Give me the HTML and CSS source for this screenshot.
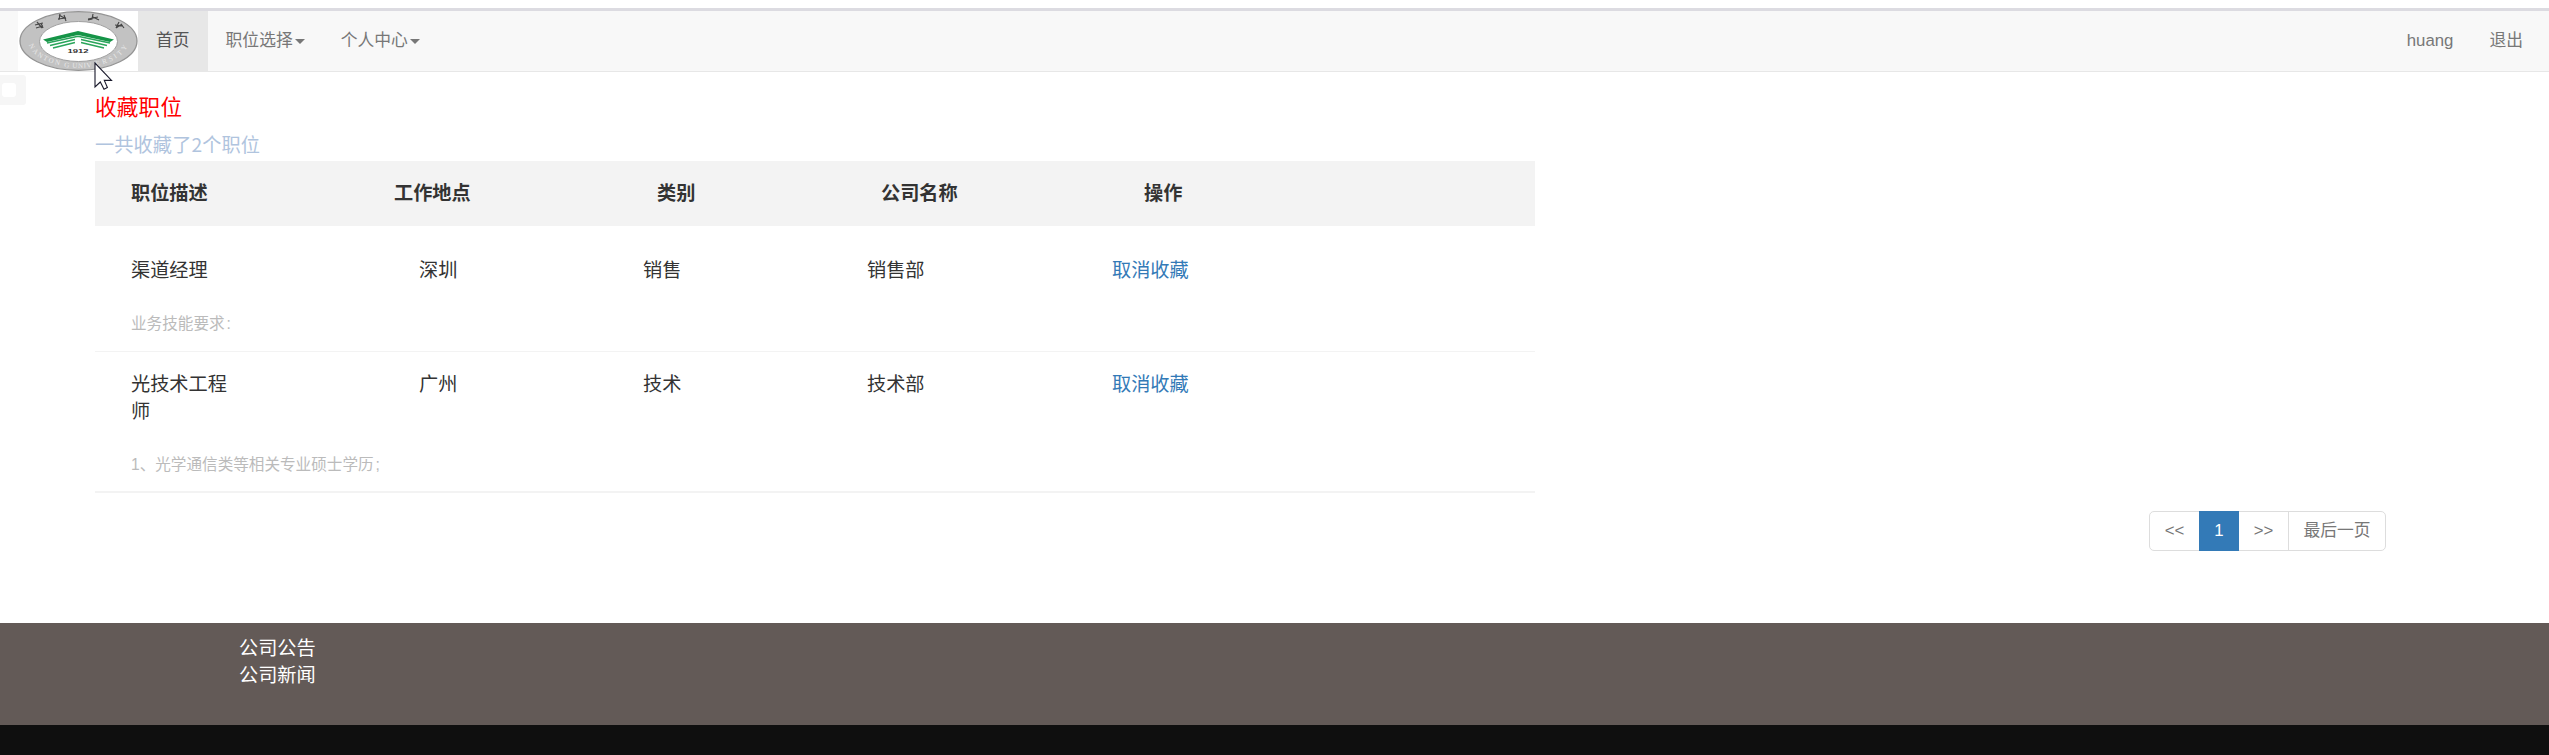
FILE: index.html
```html
<!DOCTYPE html>
<html lang="zh-CN">
<head>
<meta charset="utf-8">
<title>收藏职位</title>
<link rel="stylesheet" href="styles.css">
</head>
<body>
<nav class="navbar">
  <a class="brand" href="#">
    <svg class="logo" viewBox="0 0 120 60" width="120" height="60">
      <rect width="120" height="60" fill="#fff"/>
      <ellipse cx="60.5" cy="30" rx="58.5" ry="29.3" fill="#c2c2c2" stroke="#949494" stroke-width="1.3"/>
      <ellipse cx="60.5" cy="30.5" rx="39" ry="20" fill="#fff" stroke="#a0a0a0"/>
      <path d="M25 28.5 60 20 96 28.5 92 31 60 24 29 31Z" fill="#159447"/>
      <g fill="none" stroke="#2ba55b" stroke-width="1.6">
        <path d="M29 32 60 25.2 92 32M32 34.5 57 28.5M89 34.5 63 28.5M35 37 57 31.5M86 37 63 31.5"/>
      </g>
      <path d="M57 28h6v7h-6z" fill="#fff"/>
      <text x="60" y="42" class="logo-year" textLength="21" lengthAdjust="spacingAndGlyphs">1912</text>
      <g fill="none" stroke="#464646" stroke-width="1.2">
        <path d="M17 14l8-2M19 11l5 6M18 17l7-2M23 12l2 5M41 4l7 4M40 8l8-1M42 3l-1 6M46 4l2 6M70 8l10-2M75 3l-1 5-4 1M75 6l6 3M97 14l8 1M101 11l-3 6M98 17l6-4M103 13l3 4"/>
      </g>
      <path id="ring-left" d="M11 34Q17 49 43 54.5" fill="none"/>
      <path id="ring-mid" d="M46 56Q60 58 75 56" fill="none"/>
      <path id="ring-right" d="M78 55Q103 50 110 34" fill="none"/>
      <text class="logo-name"><textPath href="#ring-left" textLength="38">NANTON</textPath></text>
      <text class="logo-name"><textPath href="#ring-mid" textLength="28">G UNIV</textPath></text>
      <text class="logo-name"><textPath href="#ring-right" textLength="38">ERSITY</textPath></text>
    </svg>
  </a>
  <a class="nav-link active" href="#">首页</a>
  <a class="nav-link" href="#">职位选择<span class="caret"></span></a>
  <a class="nav-link" href="#">个人中心<span class="caret"></span></a>
  <div class="nav-right">
    <a class="nav-link" href="#">huang</a>
    <a class="nav-link" href="#">退出</a>
  </div>
</nav>
<div class="side-toggle"><span class="side-dot"></span></div>
<svg class="pointer" viewBox="0 0 20 29" width="20" height="29"><path d="M1 1V25L6.3 20 10 27.2 13.4 25.5 10.3 18.4H17.5Z" fill="#fff" stroke="#19192b" stroke-width="1.1"/></svg>
<main class="content">
  <h1 class="title">收藏职位</h1>
  <p class="summary">一共收藏了2个职位</p>
  <section class="jobs">
    <div class="jobs-head">
      <span>职位描述</span><span>工作地点</span><span>类别</span><span>公司名称</span><span>操作</span>
    </div>
    <article class="job">
      <div class="job-row">
        <span class="job-name">渠道经理</span><span>深圳</span><span>销售</span><span>销售部</span><a class="remove" href="#">取消收藏</a>
      </div>
      <p class="job-desc">业务技能要求<span class="colon">:</span></p>
    </article>
    <article class="job job-last">
      <div class="job-row">
        <span class="job-name">光技术工程师</span><span>广州</span><span>技术</span><span>技术部</span><a class="remove" href="#">取消收藏</a>
      </div>
      <p class="job-desc">1、光学通信类等相关专业硕士学历<span class="colon">;</span></p>
    </article>
  </section>
</main>
<div class="pager-wrap">
  <div class="pager">
    <a class="page page-prev" href="#">&lt;&lt;</a>
    <a class="page page-current" href="#">1</a>
    <a class="page page-next" href="#">&gt;&gt;</a>
    <a class="page page-end" href="#">最后一页</a>
  </div>
</div>
<footer class="footer">
  <a class="footer-link" href="#">公司公告</a>
  <a class="footer-link" href="#">公司新闻</a>
</footer>
<div class="bottom-bar"></div>
</body>
</html>
```
FILE: styles.css
```css
* { box-sizing: border-box; }
html { height: 755px; overflow: hidden; }
body {
  margin: 0;
  padding-top: 8px;
  height: 755px;
  display: flex;
  flex-direction: column;
  overflow: hidden;
  background: #fff;
  color: #333;
  font-family: "Liberation Sans", "Noto Sans CJK SC", sans-serif;
  font-size: 19.2px;
  font-weight: 400;
  line-height: 27px;
}
a { color: inherit; text-decoration: none; }
h1, p { margin: 0; }
.navbar {
  display: flex;
  flex: none;
  height: 64px;
  padding-left: 18px;
  border-top: 3px solid #dcdbe1;
  border-bottom: 1px solid #e7e7e7;
  background: #f8f8f8;
}
.brand { width: 120px; height: 60px; }
.logo { display: block; }
.logo-year { font: bold 5px "Liberation Sans", sans-serif; text-anchor: middle; fill: #333; }
.logo-name { font: 7px "Liberation Serif", serif; fill: #e8e8e8; }
.nav-link {
  display: flex;
  align-items: center;
  height: 60px;
  padding: 0 18px 1px;
  color: #777;
  font-size: 16.8px;
}
.nav-link.active { background: #e7e7e7; color: #555; }
.caret {
  margin: 2px 0 0 2px;
  border-top: 5px solid #777;
  border-left: 5px solid transparent;
  border-right: 5px solid transparent;
}
.nav-right { display: flex; margin-left: auto; padding-right: 8px; }
.side-toggle {
  position: absolute;
  left: 0;
  top: 75px;
  width: 26px;
  height: 30px;
  padding: 8px 0 0 2px;
  border-radius: 0 3px 3px 0;
  background: #f6f6f6;
}
.side-dot { display: block; width: 14px; height: 14px; border-radius: 3px; background: #fff; }
.pointer { position: absolute; left: 94px; top: 62px; }
.content { flex: none; width: 1440px; height: 421px; margin-left: 95px; padding-top: 20px; }
.title { height: 32px; color: #f00; font-size: 21.6px; font-weight: 400; line-height: 32px; letter-spacing: 0.2px; }
.summary {
  height: 30px;
  margin-top: 7px;
  color: #b0c4de;
  font-family: "Noto Sans CJK SC", sans-serif;
  letter-spacing: 0.1px;
}
.jobs-head {
  display: grid;
  grid-template-columns: 263px 263px 224px 263px 1fr;
  align-items: center;
  height: 65px;
  padding-left: 36px;
  background: #f3f3f3;
  font-weight: 700;
}
.job { height: 126px; padding: 31px 0 0 36px; border-bottom: 1px solid #f3f3f3; }
.job-row { display: grid; grid-template-columns: 288px 224px 224px 245px 1fr; }
.job-name { width: 108px; }
.remove { color: #337ab7; }
.job-desc { margin-top: 26px; color: #bbb; font-size: 15.6px; }
.colon { padding-left: 2px; }
.job-last { height: 141px; padding-top: 19px; border-bottom-width: 2px; }
.pager-wrap { display: flex; flex: none; justify-content: flex-end; height: 58px; padding: 18px 163px 0 0; }
.pager { display: flex; width: 237px; height: 40px; border: 1px solid #ddd; border-radius: 5px; }
.page {
  display: flex;
  align-items: center;
  justify-content: center;
  width: 49px;
  height: 38px;
  padding-bottom: 2px;
  color: #777;
  font-size: 16.8px;
}
.page-current { width: 40px; height: 40px; margin-top: -1px; background: #337ab7; color: #fff; }
.page-next { width: 50px; border-right: 1px solid #ddd; }
.page-end { width: 96px; }
.footer {
  display: flex;
  flex-direction: column;
  flex: none;
  height: 102px;
  margin-top: 72px;
  padding: 12px 0 0 239px;
  background: #635a57;
  color: #fff;
}
.bottom-bar { flex: none; height: 30px; background: #0f0f0f; }
```
